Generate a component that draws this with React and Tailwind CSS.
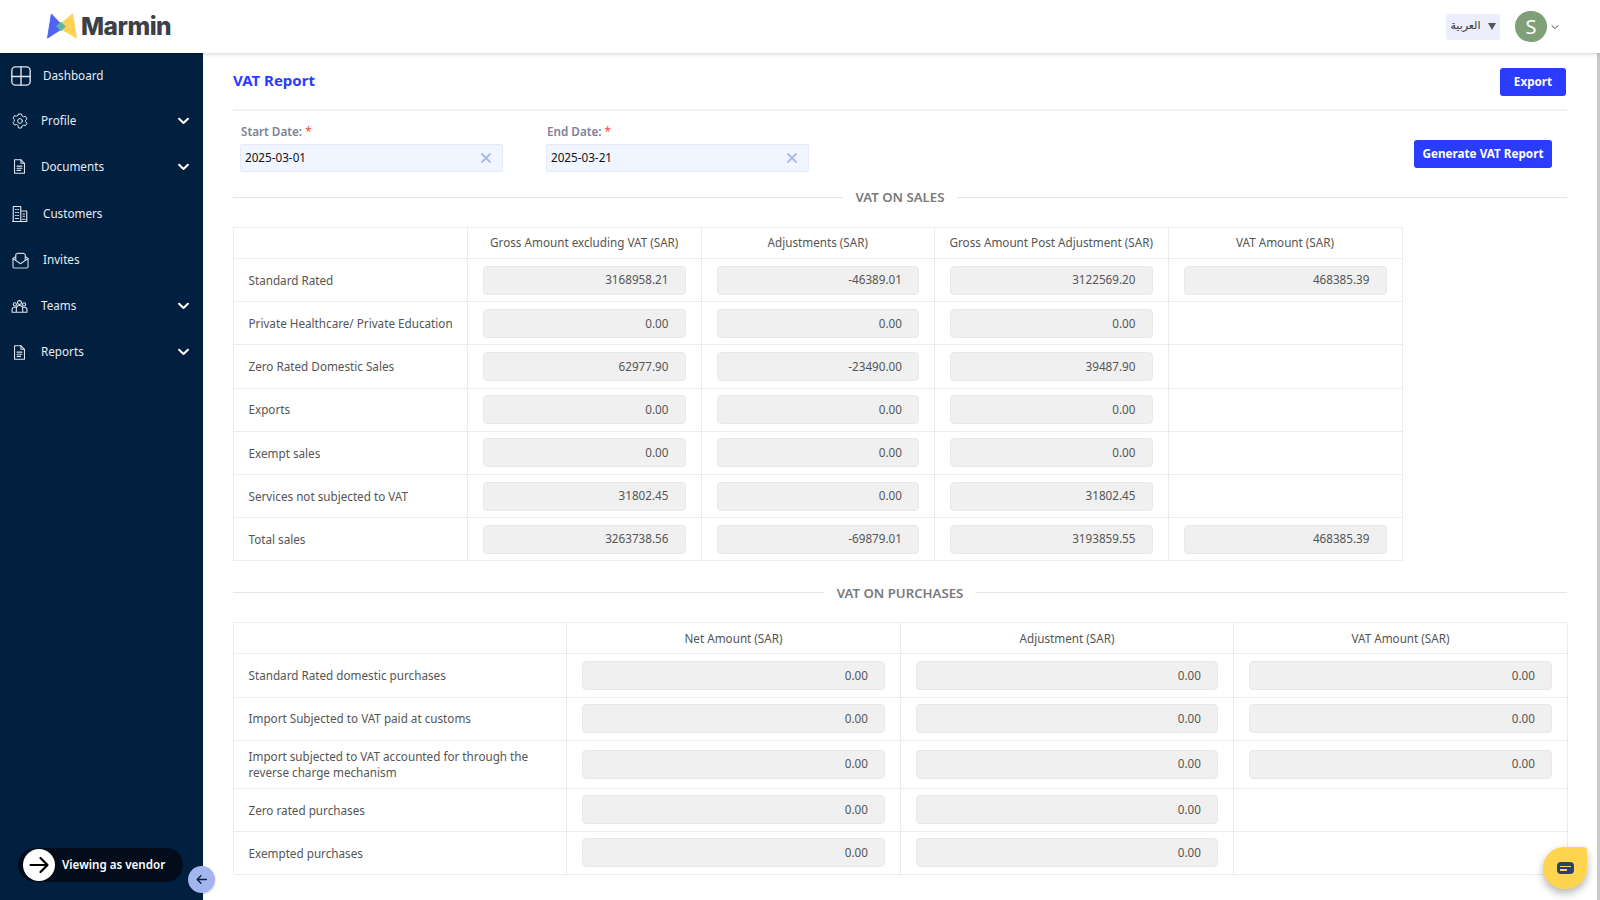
import React from "react";

const FONT = { fontFamily: '"Noto Sans", sans-serif' };

const I = ({ children, className = "" }) => (
  <svg viewBox="0 0 24 24" fill="none" stroke="currentColor" strokeWidth="1.5" strokeLinecap="round" strokeLinejoin="round" className={className}>
    {children}
  </svg>
);

const DashIcon = () => (
  <I className="w-[22px] h-[22px] text-[#dfe6f0]">
    <rect x="2" y="2" width="20" height="20" rx="4" />
    <path d="M12 2v20M2 12.500h20" />
  </I>
);
const GearIcon = () => (
  <I className="w-[16px] h-[16px] text-[#dfe6f0]">
    <path d="M9.800 2h4.400l.8 2.900 2.400 1.400 2.900-.8 2.200 3.800-2.100 2.100v2.200l2.100 2.100-2.200 3.800-2.900-.8-2.400 1.400-.8 2.900H9.800L9 19.100l-2.400-1.400-2.900.8-2.200-3.800 2.100-2.100v-2.200L1.500 8.300l2.200-3.800 2.900.8L9 3.900z" transform="translate(0 -.5)" />
    <circle cx="12" cy="12" r="3.600" />
  </I>
);
const DocIcon = () => (
  <I className="w-[17px] h-[17px] text-[#dfe6f0]">
    <path d="M5 2.500h9l5 5v14H5z" />
    <path d="M14 2.500v5h5M8.500 11.500h7M8.500 14.500h7M8.500 17.500h5" />
  </I>
);
const BuildIcon = () => (
  <I className="w-[18px] h-[18px] text-[#dfe6f0]">
    <path d="M3 22V2h10v20M13 8h8v14H2M6 6h1M9 6h1M6 10h1M9 10h1M6 14h1M9 14h1M6 18h4M16 12h2M16 15h2M15 19h4" />
  </I>
);
const MailIcon = () => (
  <I className="w-[19px] h-[19px] text-[#c9d2de]">
    <path d="M2.500 9.500 6 7M21.500 9.500 18 7M6 11V4.500L8 3h8l2 1.500V11" />
    <path d="M2.500 9.500V20a1.500 1.500 0 0 0 1.500 1.500h16a1.500 1.500 0 0 0 1.500-1.500V9.500L12 16z" />
  </I>
);
const TeamIcon = () => (
  <I className="w-[17px] h-[17px] text-[#dfe6f0]">
    <circle cx="12" cy="6.500" r="2.800" />
    <circle cx="5.500" cy="9" r="2.200" />
    <circle cx="18.500" cy="9" r="2.200" />
    <path d="M7.500 20v-5a4.500 4.500 0 0 1 9 0v5M1.500 20v-3.500A3.500 3.500 0 0 1 5 13h2M22.500 20v-3.500A3.500 3.500 0 0 0 19 13h-2M1.500 20h21" />
  </I>
);
const Chevron = () => (
  <svg viewBox="0 0 12 8" className="w-[11px] h-[8px] text-white ml-auto mr-[14px]" fill="none" stroke="currentColor" strokeWidth="2.200" strokeLinecap="round" strokeLinejoin="round">
    <path d="M1.200 1.500 6 6.200l4.800-4.700" />
  </svg>
);

const NAV = [
  { label: "Dashboard", h: "h-[45px]", icon: <DashIcon />, iconBox: "w-[43px] pl-[10px]", chevron: false },
  { label: "Profile", h: "h-[45px]", icon: <GearIcon />, iconBox: "w-[41px] pl-[12px]", chevron: true },
  { label: "Documents", h: "h-[47px]", icon: <DocIcon />, iconBox: "w-[41px] pl-[11px]", chevron: true },
  { label: "Customers", h: "h-[47px]", icon: <BuildIcon />, iconBox: "w-[43px] pl-[11px]", chevron: false },
  { label: "Invites", h: "h-[46px]", icon: <MailIcon />, iconBox: "w-[43px] pl-[11px]", chevron: false },
  { label: "Teams", h: "h-[46px]", icon: <TeamIcon />, iconBox: "w-[41px] pl-[11px]", chevron: true },
  { label: "Reports", h: "h-[46px]", icon: <DocIcon />, iconBox: "w-[41px] pl-[11px]", chevron: true },
];

const Logo = () => (
  <div className="flex items-center ml-[46px] gap-[3px]">
    <svg viewBox="0 0 32 28" className="w-[32px] h-[27px]">
      <path d="M5 1 L1 26 L18 15 Z" fill="#4f63f5" strokeLinejoin="round" stroke="#4f63f5" strokeWidth="1" />
      <path d="M27 1 L31 26 L11 14 Z" fill="#ffd257" strokeLinejoin="round" stroke="#ffd257" strokeWidth="1" />
      <path d="M10 13.500 L15 9 L20 14 L15 19 Z" fill="#5cb7a0" />
    </svg>
    <span className="text-[24.500px] font-extrabold tracking-[-0.5px] text-[#3c4048]" style={{ fontFamily: '"Inter", sans-serif' }}>Marmin</span>
  </div>
);

const Header = () => (
  <header className="h-[53px] shrink-0 bg-white flex items-center relative z-10 shadow-[0_1px_4px_rgba(0,0,0,0.18)]">
    <Logo />
    <div className="ml-auto flex items-center pr-[41px]">
      <div className="w-[54px] h-[26px] rounded-[3px] bg-[#eceefb] flex items-center justify-center gap-[7px] text-[#333]" style={{ fontFamily: '"DejaVu Sans", "Noto Sans", sans-serif' }}>
        <span className="text-[11px]">العربية</span>
        <span className="w-0 h-0 border-l-[4px] border-r-[4px] border-t-[7px] border-l-transparent border-r-transparent border-t-[#555]" />
      </div>
      <div className="ml-[15px] w-[32px] h-[31px] rounded-full bg-[#7f9f77] flex items-center justify-center text-white text-[20px]">S</div>
      <svg viewBox="0 0 12 8" className="ml-[4px] w-[8px] h-[6px] text-[#444]" fill="none" stroke="currentColor" strokeWidth="1.500"><path d="M1 1.500l5 5 5-5" /></svg>
    </div>
  </header>
);

const Sidebar = () => (
  <aside className="w-[203px] shrink-0 bg-[#011f3f] flex flex-col pb-[18px]">
    <nav className="flex flex-col">
      {NAV.map((n) => (
        <div key={n.label} className={`${n.h} flex items-center text-[11.700px] text-[#e8edf3] font-normal`}>
          <span className={`${n.iconBox} flex items-center shrink-0`}>{n.icon}</span>
          <span>{n.label}</span>
          {n.chevron && <Chevron />}
        </div>
      ))}
    </nav>
    <div className="mt-auto ml-[18px] w-[165px] h-[34px] rounded-full bg-[#020c1b] flex items-center pl-[5px] gap-[7px]">
      <span className="w-[32px] h-[32px] rounded-full bg-white flex items-center justify-center">
        <svg viewBox="0 0 24 24" className="w-[24px] h-[24px]" fill="none" stroke="#000" strokeWidth="2.200" strokeLinecap="round" strokeLinejoin="round"><path d="M3.500 12h17M13.500 5l7 7-7 7" /></svg>
      </span>
      <span className="text-[11.600px] font-semibold text-white">Viewing as vendor</span>
    </div>
  </aside>
);

const Field = ({ label, value, className = "" }) => (
  <div className={`w-[263px] ${className}`}>
    <div className="text-[11.700px] leading-[16px] font-semibold text-[#7c8299] mb-[5px] pl-[1px]">
      {label} <span className="text-[#ff5a5a]">*</span>
    </div>
    <div className="h-[28px] rounded-[2px] border border-[#e3ebfb] bg-[#f0f5ff] flex items-center pl-[4px] pr-[10px] text-[11.700px] text-[#111]">
      <span>{value}</span>
      <svg viewBox="0 0 12 12" className="ml-auto w-[12px] h-[12px] text-[#a9baea]" fill="none" stroke="currentColor" strokeWidth="1.800"><path d="M1.500 1.500l9 9M10.500 1.500l-9 9" /></svg>
    </div>
  </div>
);

const Divider = ({ children, className = "" }) => (
  <div className={`flex items-center gap-[13px] ${className}`}>
    <div className="flex-1 h-px bg-[#e6e6e6]" />
    <span className="text-[13.200px] font-semibold text-[#7a7a7a] leading-[18px]">{children}</span>
    <div className="flex-1 h-px bg-[#e6e6e6]" />
  </div>
);

const Amount = ({ v }) => (
  <div className="h-[29px] rounded-[4px] border border-[#e9e9e9] bg-[#f0f0f0] flex items-center justify-end pr-[16px] text-[11.700px] text-[#555]">{v}</div>
);

const Table = ({ widthClass, cols, head, rows }) => (
  <table className={`${widthClass} table-fixed border-collapse text-[11.700px] text-[#555]`}>
    <colgroup>
      {cols.map((c, i) => <col key={i} className={c} />)}
    </colgroup>
    <thead>
      <tr className="h-[31.500px]">
        <th className="border border-[#ececec]" />
        {head.map((h) => (
          <th key={h} className="border border-[#ececec] font-normal text-center pt-[1px]">{h}</th>
        ))}
      </tr>
    </thead>
    <tbody>
      {rows.map((r) => (
        <tr key={r.label} className={r.tall ? "h-[48px]" : "h-[43.200px]"}>
          <td className="border border-[#ececec] pl-[14.500px] pr-[5px] leading-[16.500px]">{r.label}</td>
          {r.values.map((v, i) => (
            <td key={i} className="border border-[#ececec] px-[15px]">
              {v !== null && <Amount v={v} />}
            </td>
          ))}
        </tr>
      ))}
    </tbody>
  </table>
);

const SALES = [
  { label: "Standard Rated", values: ["3168958.21", "-46389.01", "3122569.20", "468385.39"] },
  { label: "Private Healthcare/ Private Education", values: ["0.00", "0.00", "0.00", null] },
  { label: "Zero Rated Domestic Sales", values: ["62977.90", "-23490.00", "39487.90", null] },
  { label: "Exports", values: ["0.00", "0.00", "0.00", null] },
  { label: "Exempt sales", values: ["0.00", "0.00", "0.00", null] },
  { label: "Services not subjected to VAT", values: ["31802.45", "0.00", "31802.45", null] },
  { label: "Total sales", values: ["3263738.56", "-69879.01", "3193859.55", "468385.39"] },
];

const PURCHASES = [
  { label: "Standard Rated domestic purchases", values: ["0.00", "0.00", "0.00"] },
  { label: "Import Subjected to VAT paid at customs", values: ["0.00", "0.00", "0.00"] },
  { label: "Import subjected to VAT accounted for through the reverse charge mechanism", values: ["0.00", "0.00", "0.00"], tall: true },
  { label: "Zero rated purchases", values: ["0.00", "0.00", null] },
  { label: "Exempted purchases", values: ["0.00", "0.00", null] },
];

export default function App() {
  return (
    <div className="h-screen flex flex-col overflow-hidden bg-white relative" style={FONT}>
      <Header />
      <div className="flex-1 flex min-h-0">
        <Sidebar />
        <main className="flex-1 px-[30px] min-w-0">
          <div className="h-[58px] flex items-center justify-between border-b-2 border-[#f1f1f1]">
            <h1 className="text-[15px] font-bold text-[#2b3cff] mb-[2px]">VAT Report</h1>
            <button className="w-[66px] h-[28px] mt-[2px] mr-[1px] rounded-[3px] bg-[#2a3cff] text-white text-[11.700px] font-bold">Export</button>
          </div>
          <div className="flex items-start pl-[7px] pr-[15px] pt-[12px]">
            <Field label="Start Date:" value="2025-03-01" />
            <Field label="End Date:" value="2025-03-21" className="ml-[43px]" />
            <button className="ml-auto mt-[17px] w-[138px] h-[28px] rounded-[3px] bg-[#2a3cff] text-white text-[11.700px] font-bold">Generate VAT Report</button>
          </div>
          <Divider className="mt-[16px] mb-[20.500px]">VAT ON SALES</Divider>
          <Table
            widthClass="w-[1169px]"
            cols={["w-[234px]", "w-[233.500px]", "w-[233.500px]", "w-[233.500px]", "w-[234px]"]}
            head={["Gross Amount excluding VAT (SAR)", "Adjustments (SAR)", "Gross Amount Post Adjustment (SAR)", "VAT Amount (SAR)"]}
            rows={SALES}
          />
          <Divider className="mt-[22.500px] mb-[20px]">VAT ON PURCHASES</Divider>
          <Table
            widthClass="w-[1334px]"
            cols={["w-[333px]", "w-[334px]", "w-[333px]", "w-[334px]"]}
            head={["Net Amount (SAR)", "Adjustment (SAR)", "VAT Amount (SAR)"]}
            rows={PURCHASES}
          />
        </main>
        <div className="w-[3px] shrink-0 bg-[#c9c9c9]" />
      </div>

      <button className="absolute left-[188px] top-[866px] w-[27px] h-[27px] rounded-full bg-[#a3b5ee] flex items-center justify-center shadow-[0_1px_3px_rgba(0,0,0,0.2)]">
        <svg viewBox="0 0 24 24" className="w-[13px] h-[13px]" fill="none" stroke="#0b1e3f" strokeWidth="2.500" strokeLinecap="round" strokeLinejoin="round"><path d="M21 12H4M11 5l-7 7 7 7" /></svg>
      </button>

      <div className="absolute left-[1543px] top-[847px] w-[44px] h-[42px] bg-[#ffd54f] rounded-t-[21px] rounded-b-[21px] rounded-tr-[4px] flex items-center justify-center shadow-[0_4px_8px_rgba(0,0,0,0.3)]">
        <span className="w-[17px] h-[12px] rounded-[4px] bg-[#2f4066] flex flex-col justify-center gap-[2px] pl-[3px]">
          <span className="w-[11px] h-[1.500px] bg-[#ffd54f]" />
          <span className="w-[7px] h-[1.500px] bg-[#ffd54f]" />
        </span>
      </div>
    </div>
  );
}
